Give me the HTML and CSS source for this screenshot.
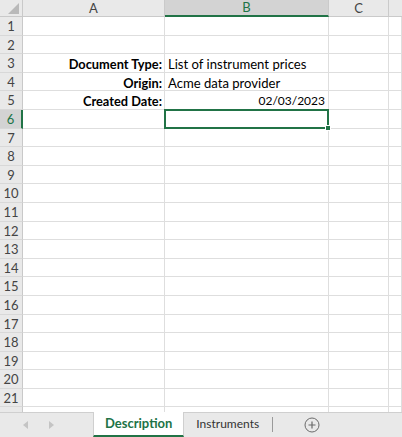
FILE: index.html
```html
<!DOCTYPE html>
<html>
<head>
<meta charset="utf-8">
<link rel="stylesheet" href="styles.css">
</head>
<body>
<div class="app">
  <div class="grid">
    <div class="corner"><svg width="22" height="17" viewBox="0 0 22 17"><polygon points="8,14 19,14 19,3" fill="#b9b9b9"/></svg></div>
    <div class="colhead">A</div><div class="colhead sel">B</div><div class="colhead">C</div><div class="colhead last"></div>

    <div class="rowhead">1</div><div class="cell"></div><div class="cell"></div><div class="cell"></div><div class="cell"></div>
    <div class="rowhead">2</div><div class="cell"></div><div class="cell"></div><div class="cell"></div><div class="cell"></div>
    <div class="rowhead">3</div><div class="cell label">Document Type:</div><div class="cell">List of instrument prices</div><div class="cell"></div><div class="cell"></div>
    <div class="rowhead">4</div><div class="cell label">Origin:</div><div class="cell">Acme data provider</div><div class="cell"></div><div class="cell"></div>
    <div class="rowhead">5</div><div class="cell label">Created Date:</div><div class="cell num">02/03/2023</div><div class="cell"></div><div class="cell"></div>
    <div class="rowhead sel">6</div><div class="cell"></div><div class="cell active"><span class="selbox"><span class="handle"></span></span></div><div class="cell"></div><div class="cell"></div>
    <div class="rowhead">7</div><div class="cell"></div><div class="cell"></div><div class="cell"></div><div class="cell"></div>
    <div class="rowhead">8</div><div class="cell"></div><div class="cell"></div><div class="cell"></div><div class="cell"></div>
    <div class="rowhead">9</div><div class="cell"></div><div class="cell"></div><div class="cell"></div><div class="cell"></div>
    <div class="rowhead">10</div><div class="cell"></div><div class="cell"></div><div class="cell"></div><div class="cell"></div>
    <div class="rowhead">11</div><div class="cell"></div><div class="cell"></div><div class="cell"></div><div class="cell"></div>
    <div class="rowhead">12</div><div class="cell"></div><div class="cell"></div><div class="cell"></div><div class="cell"></div>
    <div class="rowhead">13</div><div class="cell"></div><div class="cell"></div><div class="cell"></div><div class="cell"></div>
    <div class="rowhead">14</div><div class="cell"></div><div class="cell"></div><div class="cell"></div><div class="cell"></div>
    <div class="rowhead">15</div><div class="cell"></div><div class="cell"></div><div class="cell"></div><div class="cell"></div>
    <div class="rowhead">16</div><div class="cell"></div><div class="cell"></div><div class="cell"></div><div class="cell"></div>
    <div class="rowhead">17</div><div class="cell"></div><div class="cell"></div><div class="cell"></div><div class="cell"></div>
    <div class="rowhead">18</div><div class="cell"></div><div class="cell"></div><div class="cell"></div><div class="cell"></div>
    <div class="rowhead">19</div><div class="cell"></div><div class="cell"></div><div class="cell"></div><div class="cell"></div>
    <div class="rowhead">20</div><div class="cell"></div><div class="cell"></div><div class="cell"></div><div class="cell"></div>
    <div class="rowhead">21</div><div class="cell"></div><div class="cell"></div><div class="cell"></div><div class="cell"></div>
    <div class="rowhead"></div><div class="cell"></div><div class="cell"></div><div class="cell"></div><div class="cell"></div>
  </div>
  <div class="tabs">
    <div class="nav">
      <span class="arrow left"></span>
      <span class="arrow right"></span>
    </div>
    <div class="tab active">Description</div>
    <div class="tab">Instruments</div>
    <div class="sep"></div>
    <div class="add">
      <svg width="16" height="16" viewBox="0 0 16 16"><circle cx="8" cy="8" r="7" fill="none" stroke="#6a6a6a" stroke-width="1"/><path d="M8 4.5v7M4.5 8h7" stroke="#6a6a6a" stroke-width="1.2"/></svg>
    </div>
  </div>
</div>
</body>
</html>
```
FILE: styles.css
```css
* { box-sizing: border-box; }
html, body { margin: 0; padding: 0; background: #fff; }
body { font-family: Lato, "Open Sans", sans-serif; color: #000; }
.app { width: 402px; height: 437px; overflow: hidden; display: flex; flex-direction: column; }
.grid {
  height: 412px;
  overflow: hidden;
  display: grid;
  grid-template-columns: 23px 142px 164px 60px 1fr;
  grid-template-rows: 17px;
  grid-auto-rows: 18.6px;
  flex: none;
}
.corner { background: #e9e9e9; border-right: 1px solid #c9c9c9; border-bottom: 1px solid #c9c9c9; }
.corner svg { display: block; }
.colhead {
  background: #e9e9e9;
  border-right: 1px solid #cacaca;
  border-bottom: 1px solid #cacaca;
  font-size: 13px;
  color: #444;
  text-align: center;
  line-height: 16px;
}
.colhead.sel { background: #d3d3d3; color: #217346; border-bottom: 2px solid #217346; line-height: 15px; }
.colhead.last { border-right: none; }
.rowhead {
  background: #e9e9e9;
  border-right: 1px solid #c9c9c9;
  border-bottom: 1px solid #d8d8d8;
  font-size: 13px;
  color: #444;
  text-align: center;
  line-height: 18px;
}
.rowhead.sel { background: #d3d3d3; color: #217346; border-right: 2px solid #217346; }
.cell {
  border-right: 1px solid #dedede;
  border-bottom: 1px solid #dedede;
  font-size: 13.1px;
  line-height: 18px;
  padding: 1px 3px 0;
  white-space: nowrap;
  overflow: visible;
}
.cell.label { text-align: right; font-weight: bold; padding-right: 2px; font-size: 12.8px; }
.cell.num { text-align: right; padding-right: 3px; font-size: 12px; }
.cell.active { position: relative; }
.selbox {
  position: absolute;
  left: -1px; top: -1px; right: -1px; bottom: -1px;
  border: 2px solid #217346;
}
.handle {
  position: absolute;
  right: -4px; bottom: -4px;
  width: 6px; height: 6px;
  background: #217346;
  border: 1px solid #fff;
}
.tabs {
  height: 25px;
  background: #e9e9e9;
  border-top: 1px solid #cfcfcf;
  display: flex;
  align-items: stretch;
  font-size: 13px;
  flex: none;
}
.nav { width: 93px; display: flex; align-items: center; padding-left: 23px; gap: 21px; }
.arrow { width: 0; height: 0; border-top: 4px solid transparent; border-bottom: 4px solid transparent; }
.arrow.left { border-right: 5px solid #c4c4c4; }
.arrow.right { border-left: 5px solid #c4c4c4; }
.tab { padding: 0 12px; line-height: 22px; color: #333; font-size: 12px; }
.tab.active {
  background: #fff;
  color: #217346;
  font-weight: bold;
  font-size: 13px;
  padding: 0 11px;
  margin-top: -1px;
  border-left: 1px solid #cfcfcf;
  border-right: 1px solid #cfcfcf;
  border-bottom: 2px solid #217346;
  line-height: 23px;
}
.sep { width: 1px; background: #9a9a9a; margin: 4px 0 5px; margin-left: 1px; }
.add { width: 78px; display: flex; align-items: center; justify-content: center; }
.add svg { display: block; }
```
